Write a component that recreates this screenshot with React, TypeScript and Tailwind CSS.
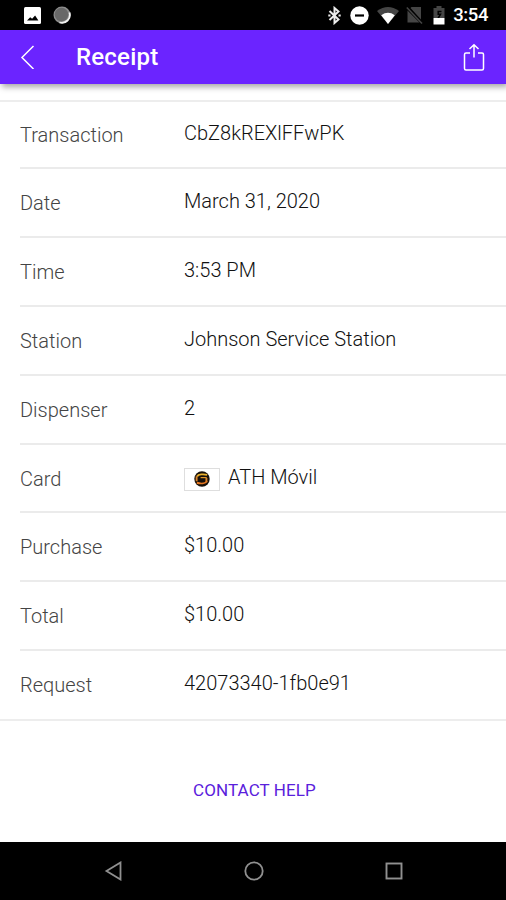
import type { FC, ReactNode } from "react";

type ReceiptRow = {
  label: string;
  value: string;
  icon?: ReactNode;
};

const CardLogo: FC = () => (
  <span className="mr-2 mt-[5px] flex h-[23px] w-9 items-center justify-center border border-[#dedede] bg-white">
    <svg width="16" height="16" viewBox="0 0 17 17" fill="none">
      <circle cx="8.500" cy="8.500" r="8.200" fill="#17100a" />
      <path
        d="M14 4.200C10 3 4.500 3.400 3.300 5.800"
        stroke="#e9b02c"
        strokeWidth="2"
      />
      <path d="M2.800 5.500v5.500M13.200 7.500v4" stroke="#d9822a" strokeWidth="2" />
      <path d="M13.500 7H7" stroke="#e0952a" strokeWidth="1.300" />
      <path
        d="M3 12.500c4 1.200 9 .8 11-1.600"
        stroke="#e87922"
        strokeWidth="2"
      />
    </svg>
  </span>
);

const rows: ReceiptRow[] = [
  { label: "Transaction", value: "CbZ8kREXlFFwPK" },
  { label: "Date", value: "March 31, 2020" },
  { label: "Time", value: "3:53 PM" },
  { label: "Station", value: "Johnson Service Station" },
  { label: "Dispenser", value: "2" },
  { label: "Card", value: "ATH Móvil", icon: <CardLogo /> },
  { label: "Purchase", value: "$10.00" },
  { label: "Total", value: "$10.00" },
  { label: "Request", value: "42073340-1fb0e91" },
];

const StatusBar: FC = () => (
  <div className="flex h-[30px] items-center justify-between bg-black pl-6 pr-[18px] text-white">
    <div className="flex items-center gap-3">
      <svg width="17" height="17" viewBox="0 0 17 17">
        <rect width="17" height="17" rx="1.500" fill="#fff" />
        <path d="M3 13.500l3.200-3.300 1.900 1.600 3-3.300 3.300 5z" fill="#000" />
      </svg>
      <svg width="18" height="18" viewBox="0 0 18 18">
        <circle cx="9" cy="9" r="8.500" fill="#8c8c8c" />
        <path d="M16.500 6.500a8 8 0 0 1-10 10" stroke="#f2f2f2" strokeWidth="1.800" fill="none" />
        <circle cx="8.500" cy="8.500" r="6.800" fill="#686868" />
      </svg>
    </div>
    <div className="flex items-center">
      <svg width="13" height="19" viewBox="0 0 13 19" fill="none" stroke="#eee" strokeWidth="2">
        <path d="M1.500 5l9 8.500L6.500 17V2l4 3.500-9 8.500" />
        <path d="M.3 9.500H2.500M10.500 9.500h2.200" />
      </svg>
      <svg className="ml-[9px]" width="19" height="19" viewBox="0 0 19 19">
        <circle cx="9.500" cy="9.500" r="9.200" fill="#fff" />
        <path d="M5 9.500h9" stroke="#000" strokeWidth="2.200" />
      </svg>
      <svg className="ml-2" width="22" height="17" viewBox="0 0 22 17">
        <path d="M0 4Q11-4 22 4L11 17z" fill="#454545" />
        <path d="M4.200 8.200Q11 3.500 17.800 8.200L11 17z" fill="#fff" />
      </svg>
      <svg className="ml-[7px]" width="17" height="18" viewBox="0 0 17 18">
        <path d="M5.500 1H15v12.500L4.500 2zM1.500 4.500L13.500 16.500h-12z" fill="#454545" />
        <path d="M.8 1.500L16 17.500" stroke="#454545" strokeWidth="1.500" />
      </svg>
      <svg className="ml-[10px]" width="12" height="19" viewBox="0 0 12 19">
        <path d="M3.500 0h5v2H11.500v10H.5V2h3z" fill="#454545" />
        <path d="M8.500 5.500H5.200v2.700h2.300L5 12.500" fill="none" stroke="#000" strokeWidth="1.500" />
        <path d="M.5 12h11v6.500H.5z" fill="#fff" />
      </svg>
      <span className="ml-2 pt-px text-[18.500px] font-medium leading-[29px] tracking-[-0.4px]">
        3:54
      </span>
    </div>
  </div>
);

const Header: FC = () => (
  <header className="flex h-[54px] items-center bg-[#6b24ff] pl-5 pr-[21px] shadow-[2px_3px_6px_rgba(0,0,0,0.35)]">
    <button aria-label="Back">
      <svg width="16" height="24" viewBox="0 0 16 24" fill="none" stroke="#fff" strokeWidth="1.500">
        <path d="M13.500 1L2 12.500 13.500 24" />
      </svg>
    </button>
    <h1 className="ml-10 text-2xl font-medium tracking-[0.2px] text-white">Receipt</h1>
    <button aria-label="Share" className="ml-auto">
      <svg width="22" height="28" viewBox="0 0 22 28" fill="none" stroke="#fff" strokeWidth="1.500">
        <path d="M7 10H3Q1.500 10 1.500 11.500v14Q1.500 27 3 27h16q1.500 0 1.500-1.500v-14Q20.500 10 19 10h-4" />
        <path d="M11 14.500V2M6.500 6L11 1.700l4.500 4.300" />
      </svg>
    </button>
  </header>
);

const NavBar: FC = () => (
  <nav className="mt-auto flex h-[58px] items-center justify-between bg-black pl-[104px] pr-[103px]">
    <svg width="18" height="20" viewBox="0 0 18 20" fill="none" stroke="#909090" strokeWidth="1.800">
      <path d="M16.500 1.500v17L2.500 10z" />
    </svg>
    <svg width="20" height="20" viewBox="0 0 20 20" fill="none" stroke="#909090" strokeWidth="1.800">
      <circle cx="10" cy="10" r="8.700" />
    </svg>
    <svg width="18" height="18" viewBox="0 0 18 18" fill="none" stroke="#909090" strokeWidth="1.900">
      <rect x="1.500" y="1.500" width="15" height="15" />
    </svg>
  </nav>
);

export default function App() {
  return (
    <div className="flex h-[900px] w-full flex-col bg-white font-[Roboto,sans-serif]">
      <StatusBar />
      <Header />
      <main className="mt-4 border-y-2 border-[#ededed]">
        <dl className="divide-y-2 divide-[#ebebeb] pl-5 text-xl font-light">
          {rows.map((r) => (
            <div
              key={r.label}
              className="flex h-[68.900px] items-center pt-px first:h-[67px] first:pt-0 last:h-[67.500px]"
            >
              <dt className="w-[164px] text-[#444]">{r.label}</dt>
              <dd className="mb-1 flex items-center text-[#111]">
                {r.icon}
                {r.value}
              </dd>
            </div>
          ))}
        </dl>
      </main>
      <button className="ml-[193px] mt-[57px] self-start text-[17px] leading-6 tracking-[0.1px] text-[#5a20dc]">
        CONTACT HELP
      </button>
      <NavBar />
    </div>
  );
}
